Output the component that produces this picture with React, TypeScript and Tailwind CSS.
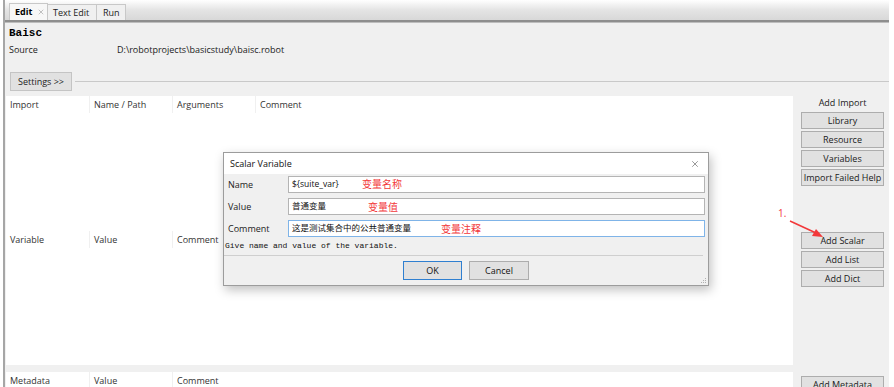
import { X } from 'lucide-react';

const ui = { fontFamily: '"Open Sans", "Noto Sans CJK SC", sans-serif' };
const mono = { fontFamily: '"Liberation Mono", "Noto Sans CJK SC", monospace' };

function SideButton({ label }: { label: string }) {
  return (
    <div className="shrink-0 h-[17px] w-[83px] flex items-center justify-center bg-[#e1e1e1] border border-[#adadad] text-[9px] text-[#1a1a1a] leading-none">
      {label}
    </div>
  );
}

function HeaderRow({ cols }: { cols: string[] }) {
  return (
    <div className="shrink-0 flex h-[17px] items-center text-[9px] text-[#333]">
      {cols.map((c, i) => (
        <div
          key={c}
          className={`w-[83px] h-full flex items-center pl-[4px] ${i > 0 ? 'border-l border-[#f0f0f0]' : ''}`}
        >
          {c}
        </div>
      ))}
    </div>
  );
}

function DialogRow({
  label,
  value,
  note,
  noteLeft,
  noteTop,
  focused,
}: {
  label: string;
  value: string;
  note: string;
  noteLeft: string;
  noteTop: string;
  focused?: boolean;
}) {
  return (
    <div className="flex h-[17px] items-center">
      <div className="w-[64px] pl-[4px] text-[9px] text-[#222]">{label}</div>
      <div
        className={`relative flex-1 h-full bg-white border flex items-center pl-[3px] text-[8.5px] text-[#111] ${
          focused ? 'border-[#7fb4e8]' : 'border-[#b4b4b4]'
        }`}
      >
        {value}
        <span className={`absolute ${noteLeft} ${noteTop} text-[10px] leading-none text-[#f2383a]`}>{note}</span>
      </div>
    </div>
  );
}

export default function App() {
  return (
    <div className="relative w-[894px] h-[387px] overflow-hidden bg-white" style={ui}>
      <div className="flex h-full pl-[3px] pr-[5px]">
        <div className="flex-1 flex flex-col border-l-2 border-[#a6a6a6]">
          {/* Tab strip */}
          <div className="shrink-0 h-[20px] flex items-end pl-[4px] bg-gradient-to-b from-white via-[#e4e4e4] to-[#d8d8d8]">
            <div className="h-[17px] w-[39px] flex items-center gap-[5px] pl-[5px] bg-[#f7f7f7] border-x border-t border-[#c8c8c8]">
              <span className="text-[9px] font-bold text-black">Edit</span>
              <X className="w-[8px] h-[8px] text-[#888]" strokeWidth={1.5} />
            </div>
            <div className="h-[16px] w-[49px] flex items-center pl-[5px] bg-[#f0f0f0] border-r border-t border-[#c8c8c8] text-[9px] text-[#222]">
              Text Edit
            </div>
            <div className="h-[16px] w-[29px] flex items-center pl-[6px] bg-[#f0f0f0] border-r border-t border-[#c8c8c8] text-[9px] text-[#222]">
              Run
            </div>
          </div>
          <div className="shrink-0 h-[3px] bg-[#8e8e8e] border-b border-[#bdbdbd]" />

          {/* Content */}
          <div className="flex-1 min-h-0 flex flex-col bg-[#f0f0f0]">
            <div className="shrink-0 pl-[4px] pt-[4px] h-[17px] text-[11px] leading-[13px] font-bold text-black" style={mono}>
              Baisc
            </div>
            <div className="shrink-0 flex h-[13px] items-center mt-[3px] pl-[4px] text-[9px] text-[#222]">
              <div className="w-[108px]">Source</div>
              <div>D:\robotprojects\basicstudy\baisc.robot</div>
            </div>
            <div className="shrink-0 flex items-center mt-[16px] pl-[5px]">
              <div className="h-[19px] w-[62px] flex items-center justify-center bg-[#e1e1e1] border border-[#c4c4c4] text-[9px] text-[#222]">
                Settings &gt;&gt;
              </div>
              <div className="flex-1 ml-[3px] border-t border-[#c9c9c9]" />
            </div>

            {/* Tables + side buttons */}
            <div className="flex flex-1 min-h-0 mt-[5px] gap-[4px]">
              <div className="ml-[1px] w-[787px] flex flex-col">
                <div className="shrink-0 h-[269px] bg-white flex flex-col">
                  <div className="shrink-0 h-[135px]">
                    <HeaderRow cols={['Import', 'Name / Path', 'Arguments', 'Comment']} />
                  </div>
                  <HeaderRow cols={['Variable', 'Value', 'Comment']} />
                </div>
                <div className="shrink-0 h-[7px]" />
                <div className="shrink-0 h-[40px] bg-white">
                  <HeaderRow cols={['Metadata', 'Value', 'Comment']} />
                </div>
              </div>

              <div className="w-[92px] flex flex-col pl-[4px]">
                <div className="shrink-0 h-[135px] flex flex-col gap-[2px]">
                  <div className="h-[14px] w-[83px] flex items-center justify-center text-[9px] text-[#222]">Add Import</div>
                  <SideButton label="Library" />
                  <SideButton label="Resource" />
                  <SideButton label="Variables" />
                  <SideButton label="Import Failed Help" />
                </div>
                <div className="shrink-0 mt-[1px] h-[134px] flex flex-col gap-[2px]">
                  <SideButton label="Add Scalar" />
                  <SideButton label="Add List" />
                  <SideButton label="Add Dict" />
                </div>
                <div className="shrink-0 mt-[10px]">
                  <SideButton label="Add Metadata" />
                </div>
              </div>
            </div>
          </div>
        </div>
      </div>

      {/* Annotation arrow */}
      <span className="absolute left-[778px] top-[208px] text-[10px] leading-none text-[#f2383a]">1.</span>
      <svg className="absolute left-[786px] top-[216px]" width="42" height="26" viewBox="0 0 42 26">
        <line x1="4" y1="5" x2="30" y2="17" stroke="#f2383a" strokeWidth="1.6" />
        <polygon points="37,21 26,20 30,13" fill="#f2383a" />
      </svg>

      {/* Scalar Variable dialog */}
      <div className="absolute left-[223px] top-[152px] w-[486px] border border-[#9c9c9c] bg-[#f0f0f0] shadow-[2px_4px_10px_rgba(0,0,0,0.25)] flex flex-col">
        <div className="h-[21px] bg-white flex items-center justify-between pl-[6px] pr-[8px]">
          <span className="text-[9px] text-[#111]">Scalar Variable</span>
          <X className="w-[10px] h-[10px] text-[#333]" strokeWidth={1.2} />
        </div>
        <div className="flex flex-col gap-[5px] pt-[2px] pr-[3px]">
          <DialogRow label="Name" value="${suite_var}" note="变量名称" noteLeft="left-[73px]" noteTop="top-[2px]" />
          <DialogRow label="Value" value="普通变量" note="变量值" noteLeft="left-[79px]" noteTop="top-[3px]" />
          <DialogRow
            label="Comment"
            value="这是测试集合中的公共普通变量"
            note="变量注释"
            noteLeft="left-[152px]"
            noteTop="top-[3px]"
            focused
          />
        </div>
        <div className="mt-[3px] h-[11px] pl-[1px] text-[8px] leading-[11px] text-[#111]" style={mono}>
          Give name and value of the variable.
        </div>
        <div className="mt-[4px] mr-[5px] border-t border-[#cfcfcf]" />
        <div className="flex mt-[5px] mb-[5px] pl-[179px] gap-[7px]">
          <div className="h-[19px] w-[59px] flex items-center justify-center bg-[#e1e1e1] border border-[#2f7fd0] text-[9px] text-[#111]">
            OK
          </div>
          <div className="h-[19px] w-[60px] flex items-center justify-center bg-[#e1e1e1] border border-[#adadad] text-[9px] text-[#111]">
            Cancel
          </div>
        </div>
        <svg className="absolute right-[1px] bottom-[1px]" width="7" height="7" viewBox="0 0 7 7">
          <rect x="5" y="1" width="1" height="1" fill="#b0b0b0" />
          <rect x="3" y="3" width="1" height="1" fill="#b0b0b0" />
          <rect x="5" y="3" width="1" height="1" fill="#b0b0b0" />
          <rect x="1" y="5" width="1" height="1" fill="#b0b0b0" />
          <rect x="3" y="5" width="1" height="1" fill="#b0b0b0" />
          <rect x="5" y="5" width="1" height="1" fill="#b0b0b0" />
        </svg>
      </div>
    </div>
  );
}
